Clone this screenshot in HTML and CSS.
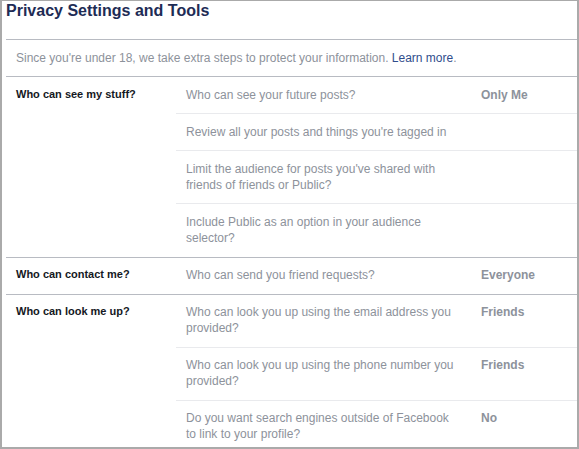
FILE: index.html
```html
<!DOCTYPE html>
<html lang="en">
<head>
    <meta charset="UTF-8">
    <title>Privacy Settings and Tools</title>
    <link rel="stylesheet" href="styles.css">
</head>
<body>
    <div class="frame">
        <h1 class="title">Privacy Settings and Tools</h1>
        <div class="intro">Since you're under 18, we take extra steps to protect your information. <a href="#">Learn more</a>.</div>

        <div class="section section-first">
            <div class="label">Who can see my stuff?</div>
            <div class="rows">
                <div class="row">
                    <div class="question">Who can see your future posts?</div>
                    <div class="value">Only Me</div>
                </div>
                <div class="row">
                    <div class="question">Review all your posts and things you're tagged in</div>
                    <div class="value"></div>
                </div>
                <div class="row">
                    <div class="question">Limit the audience for posts you've shared with friends of friends or Public?</div>
                    <div class="value"></div>
                </div>
                <div class="row">
                    <div class="question">Include Public as an option in your audience selector?</div>
                    <div class="value"></div>
                </div>
            </div>
        </div>

        <div class="section">
            <div class="label">Who can contact me?</div>
            <div class="rows">
                <div class="row">
                    <div class="question">Who can send you friend requests?</div>
                    <div class="value">Everyone</div>
                </div>
            </div>
        </div>

        <div class="section">
            <div class="label">Who can look me up?</div>
            <div class="rows">
                <div class="row">
                    <div class="question">Who can look you up using the email address you provided?</div>
                    <div class="value">Friends</div>
                </div>
                <div class="row">
                    <div class="question">Who can look you up using the phone number you provided?</div>
                    <div class="value">Friends</div>
                </div>
                <div class="row">
                    <div class="question">Do you want search engines outside of Facebook to link to your profile?</div>
                    <div class="value">No</div>
                </div>
            </div>
        </div>
    </div>
</body>
</html>
```

FILE: styles.css
```css
/* Pagina */
body {
    margin: 0;
    font-family: 'Liberation Sans', Arial, Helvetica, sans-serif;
    font-size: 12px;
    color: #8d929b;
    background-color: #fff;
}

/* Cornice */
.frame {
    box-sizing: border-box;
    width: 579px;
    height: 449px;
    overflow: hidden;
    border-top: 1px solid #aaaaaa;
    border-left: 2px solid #aaaaaa;
    border-right: 2px solid #aaaaaa;
    border-bottom: 2px solid #aaaaaa;
    padding-left: 4px;
}

.title {
    margin: 0;
    font-size: 16px;
    line-height: 20px;
    font-weight: bold;
    color: #1e2c55;
    padding-bottom: 18px;
    border-bottom: 1px solid #b8bbc2;
}

.intro {
    padding: 10px;
    line-height: 16px;
    border-bottom: 1px solid #b8bbc2;
}

.intro a {
    color: #2f4d8c;
    text-decoration: none;
}

/* Sezioni */
.section {
    display: grid;
    grid-template-columns: 170px 1fr;
    border-bottom: 1px solid #b8bbc2;
}

.section:last-child {
    border-bottom: none;
}

.section-first .rows {
    padding-bottom: 1px;
}

.label {
    padding: 9px 10px;
    font-size: 11px;
    line-height: 16px;
    font-weight: bold;
    color: #141823;
}

.row {
    display: flex;
    border-bottom: 1px solid #e9eaed;
}

.row:last-child {
    border-bottom: none;
}

.question {
    width: 275px;
    padding: 10px;
    line-height: 16px;
}

.value {
    padding: 10px;
    line-height: 16px;
    font-weight: bold;
}

/* le sezioni successive hanno il testo un pixel più in alto */
.section + .section .label {
    padding-top: 8px;
    padding-bottom: 10px;
}

.section + .section .question,
.section + .section .value {
    padding-top: 9px;
    padding-bottom: 11px;
}
```
